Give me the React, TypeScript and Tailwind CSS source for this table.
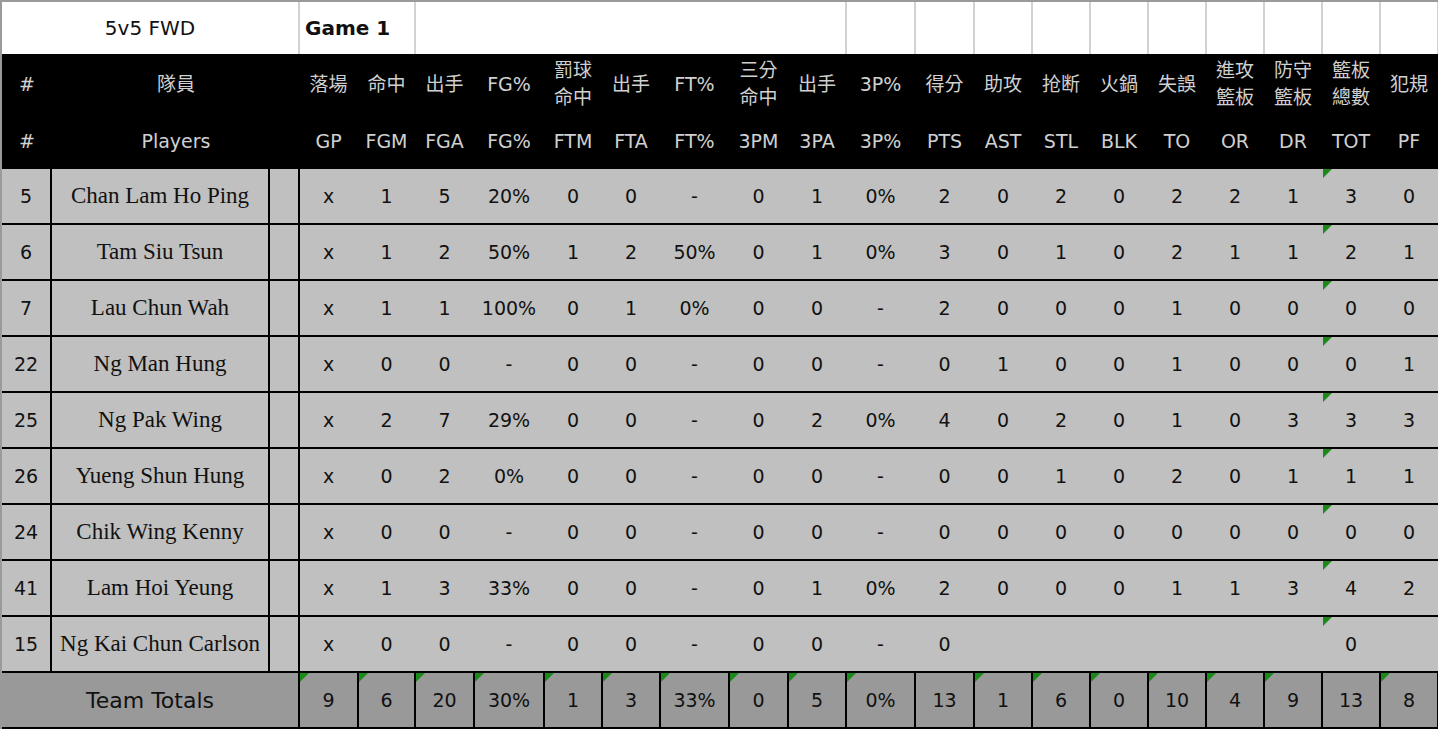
const grid =
  'grid grid-cols-[50px_218px_30px_59px_57px_59px_70px_58px_58px_69px_59px_58px_69px_59px_58px_58px_58px_58px_58px_58px_58px_58px]'

const heads = [
  { zh: ['落場'], en: 'GP' },
  { zh: ['命中'], en: 'FGM' },
  { zh: ['出手'], en: 'FGA' },
  { zh: ['FG%'], en: 'FG%' },
  { zh: ['罰球', '命中'], en: 'FTM' },
  { zh: ['出手'], en: 'FTA' },
  { zh: ['FT%'], en: 'FT%' },
  { zh: ['三分', '命中'], en: '3PM' },
  { zh: ['出手'], en: '3PA' },
  { zh: ['3P%'], en: '3P%' },
  { zh: ['得分'], en: 'PTS' },
  { zh: ['助攻'], en: 'AST' },
  { zh: ['抢断'], en: 'STL' },
  { zh: ['火鍋'], en: 'BLK' },
  { zh: ['失誤'], en: 'TO' },
  { zh: ['進攻', '籃板'], en: 'OR' },
  { zh: ['防守', '籃板'], en: 'DR' },
  { zh: ['籃板', '總數'], en: 'TOT' },
  { zh: ['犯規'], en: 'PF' },
]

const players: [string, string, string[]][] = [
  ['5', 'Chan Lam Ho Ping', ['x', '1', '5', '20%', '0', '0', '-', '0', '1', '0%', '2', '0', '2', '0', '2', '2', '1', '3', '0']],
  ['6', 'Tam Siu Tsun', ['x', '1', '2', '50%', '1', '2', '50%', '0', '1', '0%', '3', '0', '1', '0', '2', '1', '1', '2', '1']],
  ['7', 'Lau Chun Wah', ['x', '1', '1', '100%', '0', '1', '0%', '0', '0', '-', '2', '0', '0', '0', '1', '0', '0', '0', '0']],
  ['22', 'Ng Man Hung', ['x', '0', '0', '-', '0', '0', '-', '0', '0', '-', '0', '1', '0', '0', '1', '0', '0', '0', '1']],
  ['25', 'Ng Pak Wing', ['x', '2', '7', '29%', '0', '0', '-', '0', '2', '0%', '4', '0', '2', '0', '1', '0', '3', '3', '3']],
  ['26', 'Yueng Shun Hung', ['x', '0', '2', '0%', '0', '0', '-', '0', '0', '-', '0', '0', '1', '0', '2', '0', '1', '1', '1']],
  ['24', 'Chik Wing Kenny', ['x', '0', '0', '-', '0', '0', '-', '0', '0', '-', '0', '0', '0', '0', '0', '0', '0', '0', '0']],
  ['41', 'Lam Hoi Yeung', ['x', '1', '3', '33%', '0', '0', '-', '0', '1', '0%', '2', '0', '0', '0', '1', '1', '3', '4', '2']],
  ['15', 'Ng Kai Chun Carlson', ['x', '0', '0', '-', '0', '0', '-', '0', '0', '-', '0', '', '', '', '', '', '', '0', '']],
]

const totals = ['9', '6', '20', '30%', '1', '3', '33%', '0', '5', '0%', '13', '1', '6', '0', '10', '4', '9', '13', '8']
const noMark = [10, 17]

const Mark = () => (
  <span className="absolute left-0 top-0 h-0 w-0 border-t-[9px] border-r-[9px] border-t-[#1b8a1b] border-r-transparent" />
)

export default function App() {
  return (
    <div className="w-[1438px] h-[730px] overflow-hidden bg-white">
      <div className="w-[1439px] border-l-2 border-t-2 border-[#9a9a9a] font-['DejaVu_Sans','Noto_Sans_CJK_TC',sans-serif] text-[19px] text-[#111]">
        {/* title row */}
        <div className={`${grid} h-[52px] bg-white`}>
          <div className="col-span-3 flex items-center justify-center border-r-2 border-[#d2d2d2] text-[20px]">
            5v5 FWD
          </div>
          <div className="col-span-2 flex items-center border-r-2 border-[#d2d2d2] pl-[5px] text-[20px] font-bold">
            Game 1
          </div>
          <div className="col-span-7 border-r-2 border-[#d2d2d2]" />
          {Array.from({ length: 10 }).map((_, i) => (
            <div key={i} className="border-r-2 border-[#d2d2d2]" />
          ))}
        </div>

        {/* header */}
        <div className={`${grid} h-[115px] bg-black text-[#d0d0d0]`}>
          <div className="flex flex-col">
            <div className="flex h-[60px] items-center justify-center">#</div>
            <div className="flex h-[55px] items-center justify-center">#</div>
          </div>
          <div className="col-span-2 flex flex-col">
            <div className="flex h-[60px] items-center justify-center">隊員</div>
            <div className="flex h-[55px] items-center justify-center">Players</div>
          </div>
          {heads.map((h) => (
            <div key={h.en} className="flex flex-col border-r-2 border-transparent">
              <div className="flex h-[60px] flex-col items-center justify-center leading-[27px]">
                {h.zh.map((z) => (
                  <span key={z}>{z}</span>
                ))}
              </div>
              <div className="flex h-[55px] items-center justify-center">{h.en}</div>
            </div>
          ))}
        </div>

        {/* players */}
        {players.map(([no, name, vals]) => (
          <div key={no} className={`${grid} h-[56px] border-b-2 border-black bg-[#c0c0c0]`}>
            <div className="flex items-center justify-center border-r-2 border-black">{no}</div>
            <div className="flex items-center justify-center border-r-2 border-black font-['Liberation_Serif',serif] text-[23px]">
              {name}
            </div>
            <div className="border-r-2 border-black" />
            {vals.map((v, i) => (
              <div key={i} className="relative flex items-center justify-center border-r-2 border-transparent">
                {i === 17 && <Mark />}
                {v}
              </div>
            ))}
          </div>
        ))}

        {/* totals */}
        <div className={`${grid} h-[56px] border-b-2 border-black bg-[#999999]`}>
          <div className="col-span-3 flex items-center justify-center border-r-2 border-black text-[22px]">
            Team Totals
          </div>
          {totals.map((v, i) => (
            <div key={i} className="relative flex items-center justify-center border-r-2 border-black">
              {!noMark.includes(i) && <Mark />}
              {v}
            </div>
          ))}
        </div>
      </div>
    </div>
  )
}
